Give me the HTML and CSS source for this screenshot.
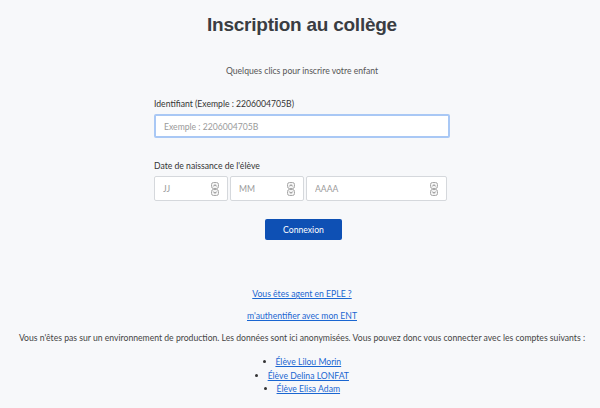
FILE: index.html
```html
<!DOCTYPE html>
<html lang="fr">
<head>
<meta charset="utf-8">
<title>Inscription au collège</title>
<link rel="stylesheet" href="styles.css">
</head>
<body>
<main class="page">
  <h1 class="title">Inscription au collège</h1>
  <p class="subtitle">Quelques clics pour inscrire votre enfant</p>
  <form class="form">
    <label class="label" for="ident">Identifiant (Exemple : 2206004705B)</label>
    <input class="input input-focus" id="ident" type="text" placeholder="Exemple : 2206004705B">
    <label class="label label-date">Date de naissance de l'élève</label>
    <div class="date-row">
      <div class="num num-small"><input class="num-input" type="text" placeholder="JJ"><svg class="spin" viewBox="0 0 8 14" width="8" height="14"><rect x="0.5" y="0.5" width="7" height="6" rx="2" fill="#f4f4f4" stroke="#a8a8a8"/><rect x="0.5" y="7.5" width="7" height="6" rx="2" fill="#f4f4f4" stroke="#a8a8a8"/><path d="M2.3 4.4 L4 2.7 L5.7 4.4" fill="none" stroke="#777" stroke-width="0.9"/><path d="M2.3 9.6 L4 11.3 L5.7 9.6" fill="none" stroke="#777" stroke-width="0.9"/></svg></div>
      <div class="num num-small"><input class="num-input" type="text" placeholder="MM"><svg class="spin" viewBox="0 0 8 14" width="8" height="14"><rect x="0.5" y="0.5" width="7" height="6" rx="2" fill="#f4f4f4" stroke="#a8a8a8"/><rect x="0.5" y="7.5" width="7" height="6" rx="2" fill="#f4f4f4" stroke="#a8a8a8"/><path d="M2.3 4.4 L4 2.7 L5.7 4.4" fill="none" stroke="#777" stroke-width="0.9"/><path d="M2.3 9.6 L4 11.3 L5.7 9.6" fill="none" stroke="#777" stroke-width="0.9"/></svg></div>
      <div class="num num-large"><input class="num-input" type="text" placeholder="AAAA"><svg class="spin" viewBox="0 0 8 14" width="8" height="14"><rect x="0.5" y="0.5" width="7" height="6" rx="2" fill="#f4f4f4" stroke="#a8a8a8"/><rect x="0.5" y="7.5" width="7" height="6" rx="2" fill="#f4f4f4" stroke="#a8a8a8"/><path d="M2.3 4.4 L4 2.7 L5.7 4.4" fill="none" stroke="#777" stroke-width="0.9"/><path d="M2.3 9.6 L4 11.3 L5.7 9.6" fill="none" stroke="#777" stroke-width="0.9"/></svg></div>
    </div>
    <div class="actions"><button class="btn" type="button">Connexion</button></div>
  </form>
  <div class="links">
    <p class="link-line"><a class="link" href="#">Vous êtes agent en EPLE ?</a></p>
    <p class="link-line"><a class="link" href="#">m'authentifier avec mon ENT</a></p>
    <p class="notice">Vous n'êtes pas sur un environnement de production. Les données sont ici anonymisées. Vous pouvez donc vous connecter avec les comptes suivants :</p>
    <ul class="accounts">
      <li><a class="link" href="#">Élève Lilou Morin</a></li>
      <li><a class="link" href="#">Élève Delina LONFAT</a></li>
      <li><a class="link" href="#">Élève Elisa Adam</a></li>
    </ul>
  </div>
</main>
</body>
</html>
```
FILE: styles.css
```css
* { box-sizing: border-box; }
html, body { margin: 0; padding: 0; }
body {
  background: #f7f8fa;
  font-family: Lato, "Noto Sans", sans-serif;
  color: #333;
  font-size: 8.65px;
}
.page {
  display: flex;
  flex-direction: column;
  align-items: center;
  padding: 12px 0 0 4px;
}
.title {
  font-family: "Liberation Sans", Arial, sans-serif;
  font-weight: 700;
  font-size: 19px;
  line-height: 25px;
  letter-spacing: -0.25px;
  color: #3a3d42;
  margin: 0;
}
.subtitle {
  margin: 27px 0 0;
  line-height: 13px;
  color: #555;
}
.form {
  width: 296px;
  margin-top: 21px;
  display: flex;
  flex-direction: column;
}
.label {
  line-height: 12px;
  color: #333;
  margin-bottom: 4px;
}
.label-date { margin-top: 22px; }
.input {
  height: 24px;
  border-radius: 2px;
  background: #fff;
  font: inherit;
  padding: 0 8px;
  outline: none;
}
.input-focus {
  border: 2px solid #a9c8f5;
}
.input::placeholder, .num-input::placeholder { color: #9a9a9a; }
.date-row {
  display: flex;
  gap: 2px;
  width: 293px;
}
.num {
  height: 25px;
  border: 1px solid #d5d8dc;
  border-radius: 2px;
  background: #fff;
  display: flex;
  align-items: center;
  padding: 0 8px 0 8px;
}
.num-small { width: 74px; }
.num-large { flex: 1; }
.num-input {
  border: 0;
  outline: none;
  background: transparent;
  font: inherit;
  flex: 1;
  min-width: 0;
  padding: 0;
}
.spin { flex: none; }
.actions {
  display: flex;
  justify-content: center;
  margin-top: 18px;
  padding-left: 3px;
}
.btn {
  width: 77px;
  height: 21px;
  border: 0;
  border-radius: 2px;
  background: #0e50b4;
  color: #fff;
  font: inherit;
}
.links {
  margin-top: 48px;
  text-align: center;
  display: flex;
  flex-direction: column;
  align-items: center;
}
.link-line { margin: 0 0 10px; line-height: 12px; }
.link { color: #1a66d1; }
.notice {
  margin: 0;
  line-height: 12px;
  color: #444;
}
.accounts {
  margin: 11px 0 0;
  padding: 0;
  list-style: disc inside;
  line-height: 13.5px;
}
.accounts li::marker { color: #333; }
```
